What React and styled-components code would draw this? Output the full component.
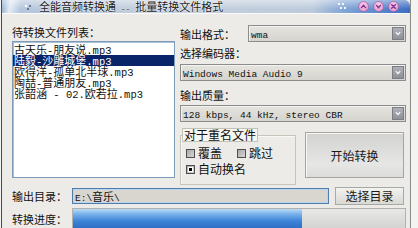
import React from "react";
import styled, { createGlobalStyle } from "styled-components";

const CJK = `"Noto Sans CJK SC", "Liberation Sans", sans-serif`;

const GlobalStyle = createGlobalStyle`
  html, body {
    margin: 0;
    padding: 0;
    background: #f3f3f1;
  }
  body {
    width: 418px;
    height: 228px;
    overflow: hidden;
    font-family: ${CJK};
    font-size: 11px;
    color: #111;
  }
`;

const files = [
  "古天乐-朋友说.mp3",
  "陆毅-沙雕城堡.mp3",
  "欧得洋-孤单北半球.mp3",
  "陶喆-普通朋友.mp3",
  "张韶涵 - 02.欧若拉.mp3",
];

const progress = 69;

const Latin = styled.span`
  font-family: "Liberation Mono", monospace;
  font-size: ${(p) => p.$size || 10}px;
  line-height: 0;
`;

// ascii parts are drawn in a mono face, like the half-width glyphs of SimSun
function Mixed({ text, size }) {
  return text
    .split(/([\x20-\x7e]+)/)
    .filter(Boolean)
    .map((part, i) =>
      /^[\x20-\x7e]+$/.test(part) ? (
        <Latin key={i} $size={size}>
          {part}
        </Latin>
      ) : (
        <span key={i}>{part}</span>
      )
    );
}

const Window = styled.div`
  width: 410px;
  height: 228px;
  margin-left: 1px;
  box-sizing: border-box;
  display: flex;
  flex-direction: column;
  background: #ecebe7;
  border-left: 1px solid #4a4a4a;
  border-right: 1px solid #8a8a8a;
`;

const TitleBar = styled.div`
  height: 13px;
  flex: none;
  display: flex;
  align-items: center;
  border-bottom: 1px solid #fafafa;
  border-top-right-radius: 6px;
  background: linear-gradient(
      to bottom,
      rgba(255, 255, 255, 0.45) 0%,
      rgba(255, 255, 255, 0) 70%
    ),
    linear-gradient(
      100deg,
      #8eaad0 0px,
      #e4ebf3 9px,
      #b4c6dc 20px,
      #c4cfdc 40%,
      #bccadb 76%,
      #7fa4d6 84%,
      #3c6dc2 100%
    );
`;

const AppIcon = styled.svg`
  margin-left: 23px;
  flex: none;
`;

const TitleText = styled.div`
  margin-left: 6px;
  font-size: 11px;
  line-height: 13px;
  color: #1a1a1a;
  text-shadow: 0 0 2px #fff, 0 0 1px #fff;
  white-space: nowrap;
`;

const Grip = styled.svg`
  margin-left: auto;
  margin-right: 12px;
  flex: none;
`;

const TitleButtons = styled.div`
  display: flex;
  gap: 4px;
  margin-right: 11px;
`;

function TitleButton({ kind }) {
  const glyph =
    kind === "x" ? (
      <path d="M4 4 L8 8 M8 4 L4 8" />
    ) : kind === "down" ? (
      <path d="M3.8 4.8 L6 7.4 L8.2 4.8" />
    ) : (
      <path d="M3.8 7.2 L6 4.6 L8.2 7.2" />
    );
  return (
    <svg width="11" height="11" viewBox="0 0 12 12">
      <circle cx="6" cy="6" r="5.4" fill="#e9a9d8" stroke="#a55aa0" strokeWidth="0.8" />
      <circle cx="6" cy="4.6" r="3.4" fill="#f6d3ec" opacity="0.6" />
      <g stroke="#7b2c8c" strokeWidth="1.5" fill="none" strokeLinecap="round">
        {glyph}
      </g>
    </svg>
  );
}

const Body = styled.div`
  flex: 1;
  display: flex;
  flex-direction: column;
  padding: 11px 4px 0 10px;
`;

const TopArea = styled.div`
  display: grid;
  grid-template-columns: 163px 1fr;
  column-gap: 5px;
  align-items: start;
`;

const Column = styled.div`
  display: flex;
  flex-direction: column;
`;

const Label = styled.div`
  font-size: 11px;
  line-height: 14px;
  height: 14px;
  white-space: nowrap;
  margin-top: ${(p) => p.$top || 0}px;
  margin-bottom: ${(p) => p.$bottom || 0}px;
  width: ${(p) => (p.$width ? `${p.$width}px` : "auto")};
  flex: none;
`;

const ListBox = styled.div`
  height: 137px;
  box-sizing: border-box;
  background: #fff;
  border: 1px solid #7f9db9;
  box-shadow: inset 1px 1px 0 #a9bfd6;
  padding-top: 2px;
`;

const ListItem = styled.div`
  height: 11px;
  line-height: 11px;
  font-size: 11px;
  padding-left: 1px;
  white-space: nowrap;
  color: ${(p) => (p.$selected ? "#fff" : "#111")};
  background: ${(p) => (p.$selected ? "#0a246a" : "transparent")};
`;

const InlineRow = styled.div`
  display: flex;
  align-items: center;
`;

const Combo = styled.div`
  flex: ${(p) => (p.$inline ? "1" : "none")};
  height: 17px;
  margin-top: ${(p) => p.$top || 0}px;
  box-sizing: border-box;
  display: flex;
  align-items: center;
  border: 1px solid #8c8c8c;
  background: linear-gradient(to bottom, #e6e4df, #d6d4ce);
  box-shadow: inset 1px 1px 0 #f4f3f0;
  line-height: 13px;
`;

const ComboText = styled.div`
  flex: 1;
  padding-left: 2px;
  white-space: nowrap;
  overflow: hidden;
  color: #111;
`;

const ComboButton = styled.div`
  width: 12px;
  height: 13px;
  margin-right: 1px;
  display: flex;
  align-items: center;
  justify-content: center;
  background: linear-gradient(to bottom, #aeb2b8, #8e9298);
  border: 1px solid #7a7e84;
  box-sizing: border-box;
`;

function ComboBox({ value, size, top, inline }) {
  return (
    <Combo $top={top} $inline={inline}>
      <ComboText>
        <Latin $size={size}>{value}</Latin>
      </ComboText>
      <ComboButton>
        <svg width="6" height="5" viewBox="0 0 6 5">
          <path d="M0.8 1.2 L3 3.6 L5.2 1.2" stroke="#fff" strokeWidth="1.2" fill="none" />
        </svg>
      </ComboButton>
    </Combo>
  );
}

const OptionsRow = styled.div`
  display: flex;
  gap: 9px;
  margin-top: 6px;
`;

const GroupBox = styled.fieldset`
  margin: 0;
  width: 116px;
  height: 57px;
  box-sizing: border-box;
  padding: 0 0 0 5px;
  border: 1px solid #c6c5ba;
  box-shadow: inset 1px 1px 0 #f8f8f6;
  min-width: 0;
`;

const Legend = styled.legend`
  margin-left: -4px;
  padding: 0 1px;
  font-size: 12px;
  line-height: 12px;
  background: #f5f5f2;
  border: 1px solid #c2c2b8;
`;

const CheckRow = styled.div`
  display: flex;
  gap: 15px;
  margin-top: ${(p) => p.$top || 0}px;
`;

const CheckItem = styled.div`
  display: flex;
  align-items: center;
  gap: 3px;
  font-size: 12px;
  line-height: 12px;
`;

const CheckBox = styled.span`
  width: 9px;
  height: 9px;
  box-sizing: border-box;
  display: flex;
  align-items: center;
  justify-content: center;
  border: 1px solid #4e4e4e;
  background: linear-gradient(135deg, #a8a8a8, #d6d6d6);
`;

const CheckMark = styled.span`
  width: 3px;
  height: 3px;
  background: #000;
  box-shadow: 0 0 0 1px #fff;
`;

const StartButton = styled.button`
  width: 99px;
  height: 46px;
  margin-top: 4px;
  padding: 0;
  font-family: ${CJK};
  font-size: 12px;
  color: #1a1a1a;
  border: 1px solid #a4a4a0;
  background: linear-gradient(to bottom, #d2d2d0, #e6e6e4 70%, #dcdcda);
  box-shadow: inset 1px 1px 0 #f6f6f4;
`;

const FieldRow = styled.div`
  display: flex;
  align-items: center;
  height: ${(p) => p.$height}px;
  margin-top: ${(p) => p.$top}px;
  flex: none;
`;

const PathInput = styled.div`
  flex: 1;
  height: 16px;
  box-sizing: border-box;
  border: 1px solid #4f7dae;
  box-shadow: inset 0 0 0 1px #bcd5ee;
  background: #d9d6cf;
  padding-left: 2px;
  font-size: 11px;
  line-height: 14px;
  white-space: nowrap;
`;

const SmallButton = styled.button`
  width: 69px;
  height: 18px;
  margin: 0 2px 0 6px;
  padding: 0;
  font-family: ${CJK};
  font-size: 12px;
  line-height: 14px;
  color: #1a1a1a;
  border: 1px solid #a8a8a4;
  background: linear-gradient(to bottom, #f2f2f0, #d8d8d4);
`;

const ProgressTrack = styled.div`
  flex: 1;
  height: 22px;
  box-sizing: border-box;
  border: 1px solid #b0b0ac;
  background: linear-gradient(to bottom, #e8e8e6, #d2d2d0);
`;

const ProgressFill = styled.div`
  height: 100%;
  background: linear-gradient(
    to bottom,
    #bcdaf6 0%,
    #78b2ea 25%,
    #3d84d8 60%,
    #2c6cc2 100%
  );
`;

export default function App() {
  return (
    <>
      <GlobalStyle />
      <Window>
        <TitleBar>
          <AppIcon width="8" height="6" viewBox="0 0 8 6">
            <rect x="0" y="1" width="2" height="2" fill="#fff" />
            <rect x="4" y="1" width="2" height="2" fill="#6a7890" />
            <rect x="2" y="4" width="2" height="2" fill="#6a7890" />
          </AppIcon>
          <TitleText>
            <Mixed text="全能音频转换通 -- 批量转换文件格式" size={8} />
          </TitleText>
          <Grip width="8" height="7" viewBox="0 0 8 7">
            <rect x="0" y="0" width="2" height="2" fill="#f4f6fa" />
            <rect x="4" y="0" width="2" height="2" fill="#f4f6fa" />
            <rect x="2" y="4" width="2" height="2" fill="#f4f6fa" />
            <rect x="6" y="4" width="2" height="2" fill="#f4f6fa" />
          </Grip>
          <TitleButtons>
            <TitleButton kind="up" />
            <TitleButton kind="down" />
            <TitleButton kind="x" />
          </TitleButtons>
        </TitleBar>
        <Body>
          <TopArea>
            <Column>
              <Label $bottom={2}>待转换文件列表：</Label>
              <ListBox>
                {files.map((f, i) => (
                  <ListItem key={f} $selected={i === 1}>
                    <Mixed text={f} size={10.5} />
                  </ListItem>
                ))}
              </ListBox>
            </Column>
            <Column>
              <InlineRow>
                <Label $width={68}>输出格式：</Label>
                <ComboBox value="wma" size={9.5} inline />
              </InlineRow>
              <Label $top={4}>选择编码器：</Label>
              <ComboBox value="Windows Media Audio 9" size={9.5} top={4} />
              <Label $top={7}>输出质量：</Label>
              <ComboBox value="128 kbps, 44 kHz, stereo CBR" size={9.5} top={3} />
              <OptionsRow>
                <GroupBox>
                  <Legend>对于重名文件</Legend>
                  <CheckRow $top={5}>
                    <CheckItem>
                      <CheckBox />
                      覆盖
                    </CheckItem>
                    <CheckItem>
                      <CheckBox />
                      跳过
                    </CheckItem>
                  </CheckRow>
                  <CheckRow $top={4}>
                    <CheckItem>
                      <CheckBox>
                        <CheckMark />
                      </CheckBox>
                      自动换名
                    </CheckItem>
                  </CheckRow>
                </GroupBox>
                <StartButton>开始转换</StartButton>
              </OptionsRow>
            </Column>
          </TopArea>
          <FieldRow $height={18} $top={2}>
            <Label $width={60}>输出目录：</Label>
            <PathInput>
              <Mixed text="E:\音乐\" size={9.5} />
            </PathInput>
            <SmallButton>选择目录</SmallButton>
          </FieldRow>
          <FieldRow $height={22} $top={3}>
            <Label $width={60}>转换进度：</Label>
            <ProgressTrack>
              <ProgressFill style={{ width: `${progress}%` }} />
            </ProgressTrack>
          </FieldRow>
        </Body>
      </Window>
    </>
  );
}
